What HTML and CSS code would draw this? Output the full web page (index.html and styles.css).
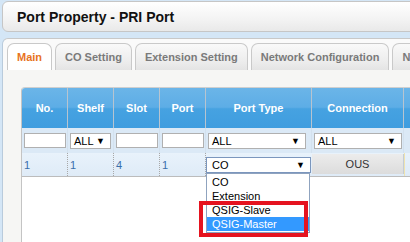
FILE: index.html
```html
<!DOCTYPE html>
<html lang="en">
<head>
<meta charset="UTF-8" />
<title>Port Property - PRI Port</title>
<link rel="stylesheet" href="styles.css">
</head>
<body>

<div class="title-bar">
  <h1>Port Property - PRI Port</h1>
</div>

<div class="tabs-panel">
  <ul class="tabs">
    <li class="active">Main</li>
    <li>CO Setting</li>
    <li>Extension Setting</li>
    <li>Network Configuration</li>
    <li>Network Setting</li>
  </ul>

  <div class="tab-body">
    <div class="grid">
      <div class="row head">
        <div class="cell">No.</div>
        <div class="cell">Shelf</div>
        <div class="cell">Slot</div>
        <div class="cell">Port</div>
        <div class="cell">Port Type</div>
        <div class="cell">Connection</div>
        <div class="cell"></div>
      </div>

      <div class="row filter">
        <div class="cell"><div class="input"></div></div>
        <div class="cell"><div class="select shelf">ALL<span class="arrow">▼</span></div></div>
        <div class="cell"><div class="input"></div></div>
        <div class="cell"><div class="input"></div></div>
        <div class="cell"><div class="select type">ALL<span class="arrow">▼</span></div></div>
        <div class="cell"><div class="select conn">ALL<span class="arrow">▼</span></div></div>
        <div class="cell"></div>
      </div>

      <div class="row data">
        <div class="cell dotted">1</div>
        <div class="cell dotted">1</div>
        <div class="cell dotted">4</div>
        <div class="cell dotted">1</div>
        <div class="cell open">
          <div class="select current">CO<span class="arrow">▼</span></div>
          <!-- opened list of the port type select -->
          <ul class="options">
            <li>CO</li>
            <li>Extension</li>
            <li>QSIG-Slave</li>
            <li class="hover">QSIG-Master</li>
          </ul>
          <div class="mark"></div>
        </div>
        <div class="cell conn-value">OUS</div>
        <div class="cell last"></div>
      </div>
    </div>
  </div>
</div>

</body>
</html>
```

FILE: styles.css
```css
body {
  font-family: "Liberation Sans", Arial, sans-serif;
  background: #d4e6f6;
  margin: 0;
  width: 410px;
  height: 242px;
  overflow: hidden;
  color: #222;
}
/* Titulo */
.title-bar {
  margin: 1px 0 0 2px;
  width: 440px;
  height: 29px;
  border: 1px solid #c6c6c6;
  border-radius: 6px;
  background: linear-gradient(#ffffff, #f3f3f3 60%, #e9e9e9);
}
.title-bar h1 {
  margin: 0;
  padding-left: 14px;
  font-size: 14px;
  line-height: 30px;
  color: #111;
}
/* Abas */
.tabs-panel {
  margin: 6px 0 0 2px;
  width: 440px;
  border: 1px solid #c8c8c8;
  border-left-color: #b9cbdc;
  border-radius: 6px 6px 0 0;
  background: #fafafa;
}
.tabs {
  list-style: none;
  margin: 0;
  padding: 4px 0 0 4px;
  display: flex;
  gap: 3px;
  white-space: nowrap;
}
.tabs li {
  height: 26px;
  line-height: 26px;
  padding: 0 9px;
  border: 1px solid #c9c9c9;
  border-bottom: none;
  border-radius: 7px 7px 0 0;
  background: linear-gradient(#f9f9f9, #ececec 70%, #e4e4e4);
  color: #7a7a7a;
  font-size: 11px;
  font-weight: bold;
}
.tabs li.active {
  background: #fff;
  color: #e8731e;
}
.tab-body {
  padding: 17px 0 0 18px;
  height: 160px;
  background: #f6f6f4;
}
/* Tabela */
.grid {
  height: 170px;
  background: #fff;
  border-top: 1px solid #cfcfcf;
  border-left: 1px solid #c4c4c4;
  border-radius: 4px 0 0 0;
}
.row {
  display: grid;
  grid-template-columns: 46px 46px 46px 46px 106px 92px 60px;
}
.cell {
  box-sizing: border-box;
  border-right: 1px solid #c3ccd6;
  font-size: 11px;
  display: flex;
  align-items: center;
}
.head {
  height: 40px;
  border-radius: 3px 0 0 0;
  background: linear-gradient(#6bb5e8, #5dade6 48%, #46a2e1 52%, #3f9ddf);
}
.head .cell {
  justify-content: center;
  color: #fff;
  font-weight: bold;
  border-right-color: #b7c4d0;
}
.filter {
  height: 25px;
  background: #dbe9f6;
}
.filter .cell {
  padding: 0 1px 0 2px;
  border-right-color: #d3e1ee;
}
.input {
  width: 100%;
  height: 15px;
  box-sizing: border-box;
  background: #fff;
  border: 1px solid #b0b0b0;
}
.select {
  position: relative;
  box-sizing: border-box;
  height: 16px;
  line-height: 14px;
  padding-left: 3px;
  background: #fff;
  border: 1px solid #b0b0b0;
  font-size: 11px;
  color: #000;
}
.select .arrow {
  position: absolute;
  right: 5px;
  top: 0;
  font-size: 9px;
}
.select.shelf {
  width: 41px;
}
.select.type {
  width: 98px;
}
.select.conn {
  width: 91px;
}
.data {
  height: 23px;
  border-bottom: 1px solid #bcbcbc;
  background: linear-gradient(#e8f2fb, #dfebf7);
}
.data .cell {
  color: #3a6eaa;
  padding-left: 2px;
}
.data .cell.dotted {
  border-right: 1px dotted #a8a8a8;
}
.data .cell.open {
  position: relative;
  padding-left: 0;
  border-right: none;
  align-items: flex-start;
  padding-top: 4px;
}
.select.current {
  width: 105px;
  padding-left: 5px;
  border-color: #7b96bd;
}
.conn-value {
  justify-content: center;
  margin: 1px 0 2px;
  background: linear-gradient(#ececec, #dcdcdc);
}
.data .cell.conn-value {
  color: #333;
  padding-left: 0;
}
.data .cell.last {
  border-left: 1px solid #efe3b0;
  border-right: none;
}
/* Lista aberta */
.options {
  position: absolute;
  left: 0;
  top: 20px;
  width: 104px;
  box-sizing: border-box;
  margin: 0;
  padding: 1px 0 1px;
  list-style: none;
  background: #fff;
  border: 1px solid #8fa3bf;
  z-index: 2;
}
.options li {
  height: 14px;
  line-height: 14px;
  padding-left: 5px;
  font-size: 11px;
  color: #000;
}
.options li.hover {
  background: #3399ff;
  color: #fff;
}
.mark {
  position: absolute;
  left: -7px;
  top: 48px;
  width: 109px;
  height: 36px;
  box-sizing: border-box;
  border: 4px solid #e5131f;
  z-index: 3;
}
```
